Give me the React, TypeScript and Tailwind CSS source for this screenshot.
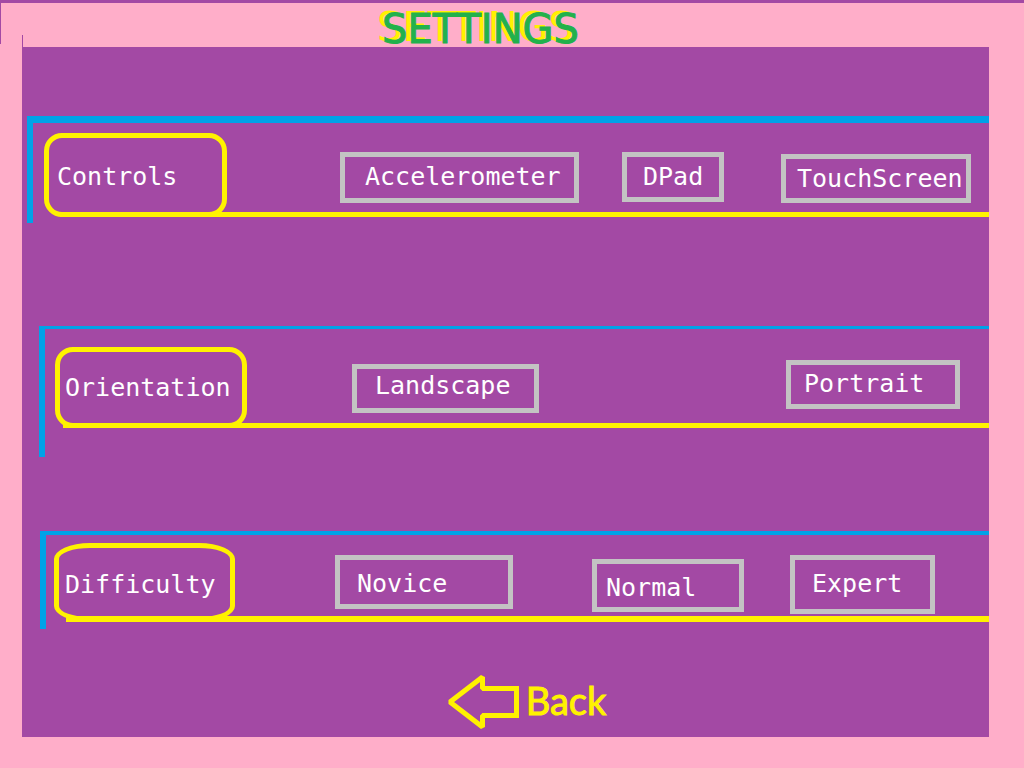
type Option = { label: string; className: string };

type SettingProps = {
  title: string;
  className: string;
  labelClassName: string;
  optionsClassName: string;
  options: Option[];
};

const settings: SettingProps[] = [
  {
    title: 'Controls',
    className: 'mt-[69px] ml-[5px] border-t-7 pt-[10px] pb-[6px] pl-[11px]',
    labelClassName: '-mr-[167px] h-[84px] w-[183px] rounded-[18px] pl-2 pt-1',
    optionsClassName: 'border-b-5 pl-[280px] pt-[19px]',
    options: [
      { label: 'Accelerometer', className: 'h-[51px] w-[239px] pl-5 pb-[2px]' },
      { label: 'DPad', className: 'ml-[43px] h-[50px] w-[102px] pl-4' },
      { label: 'TouchScreen', className: 'mt-[2px] ml-[57px] h-[49px] w-[190px] pl-[11px]' },
    ],
  },
  {
    title: 'Orientation',
    className: 'mt-[103px] ml-[17px] border-t-3 pt-[18px] pb-[29px] pl-[10px]',
    labelClassName: '-mr-[184px] h-[81px] w-[192px] rounded-[18px] pl-[5px]',
    optionsClassName: 'border-b-5 pl-[289px] pt-[13px]',
    options: [
      { label: 'Landscape', className: 'mt-1 h-[49px] w-[187px] pl-[18px] pb-[5px]' },
      { label: 'Portrait', className: 'ml-[247px] h-[49px] w-[174px] pl-[13px] pb-[2px]' },
    ],
  },
  {
    title: 'Difficulty',
    className: 'mt-[74px] ml-[18px] border-t-4 pt-2 pb-[7px] pl-2',
    labelClassName: '-mr-[169px] h-[79px] w-[181px] rounded-[36px/16px] pl-[6px] pt-1',
    optionsClassName: 'border-b-6 pl-[269px] pt-3',
    options: [
      { label: 'Novice', className: 'h-[54px] w-[178px] pl-[17px] pt-1' },
      { label: 'Normal', className: 'mt-1 ml-[79px] h-[53px] w-[152px] pl-[9px] pt-1' },
      { label: 'Expert', className: 'ml-[46px] h-[59px] w-[145px] pl-[17px] pb-[2px]' },
    ],
  },
];

function Setting({ title, className, labelClassName, optionsClassName, options }: SettingProps) {
  return (
    <section className={`flex border-l-6 border-[#00a2e8] ${className}`}>
      <h2 className={`flex shrink-0 items-center border-5 border-[#fff200] ${labelClassName}`}>{title}</h2>
      <div className={`flex flex-1 items-start border-[#fff200] ${optionsClassName}`}>
        {options.map((option) => (
          <button
            key={option.label}
            type="button"
            className={`flex shrink-0 items-center border-5 border-[#c3c3c3] ${option.className}`}
          >
            {option.label}
          </button>
        ))}
      </div>
    </section>
  );
}

export default function App() {
  return (
    <div className="flex min-h-screen flex-col bg-[#ffaec9] pb-[31px]">
      <header className="flex h-[47px] border-t-3 border-[#a349a4]">
        <span className="h-[41px] w-px bg-[#a349a4]" />
        <span className="ml-[21px] h-3 w-px self-end bg-[#a349a4]" />
        <h1 className="flex-1 pr-[86px] text-center font-['Comic_Sans_MS','DejaVu_Sans',sans-serif] text-[40px] leading-[52px] text-[#22b14c] [-webkit-text-stroke:1px] [text-shadow:-5px_-2px_0_#fff200]">
          SETTINGS
        </h1>
      </header>
      <main className="mr-[35px] ml-[22px] flex-1 bg-[#a349a4] font-['DejaVu_Sans_Mono',monospace] text-[25px] leading-[30px] text-white">
        <div className="flow-root">
          {settings.map((setting) => (
            <Setting key={setting.title} {...setting} />
          ))}
        </div>
        <div className="flex justify-center pt-11 pl-[43px]">
          <button
            type="button"
            className="flex items-center gap-[6px] font-['Comic_Sans_MS',Lato,sans-serif] text-[38px] leading-[54px] text-[#fff200]"
          >
            <svg width="72" height="58" viewBox="0 0 72 58" fill="none" stroke="currentColor" strokeWidth="5" aria-hidden="true">
              <path d="M2 29 34.500 4V15.500H68.500V42.500H34.500V54Z" strokeLinejoin="bevel" />
              <path d="M34.500 15.500H68.500V42.500H34.500" />
            </svg>
            <span className="pb-1 [-webkit-text-stroke:1px]">Back</span>
          </button>
        </div>
      </main>
    </div>
  );
}
